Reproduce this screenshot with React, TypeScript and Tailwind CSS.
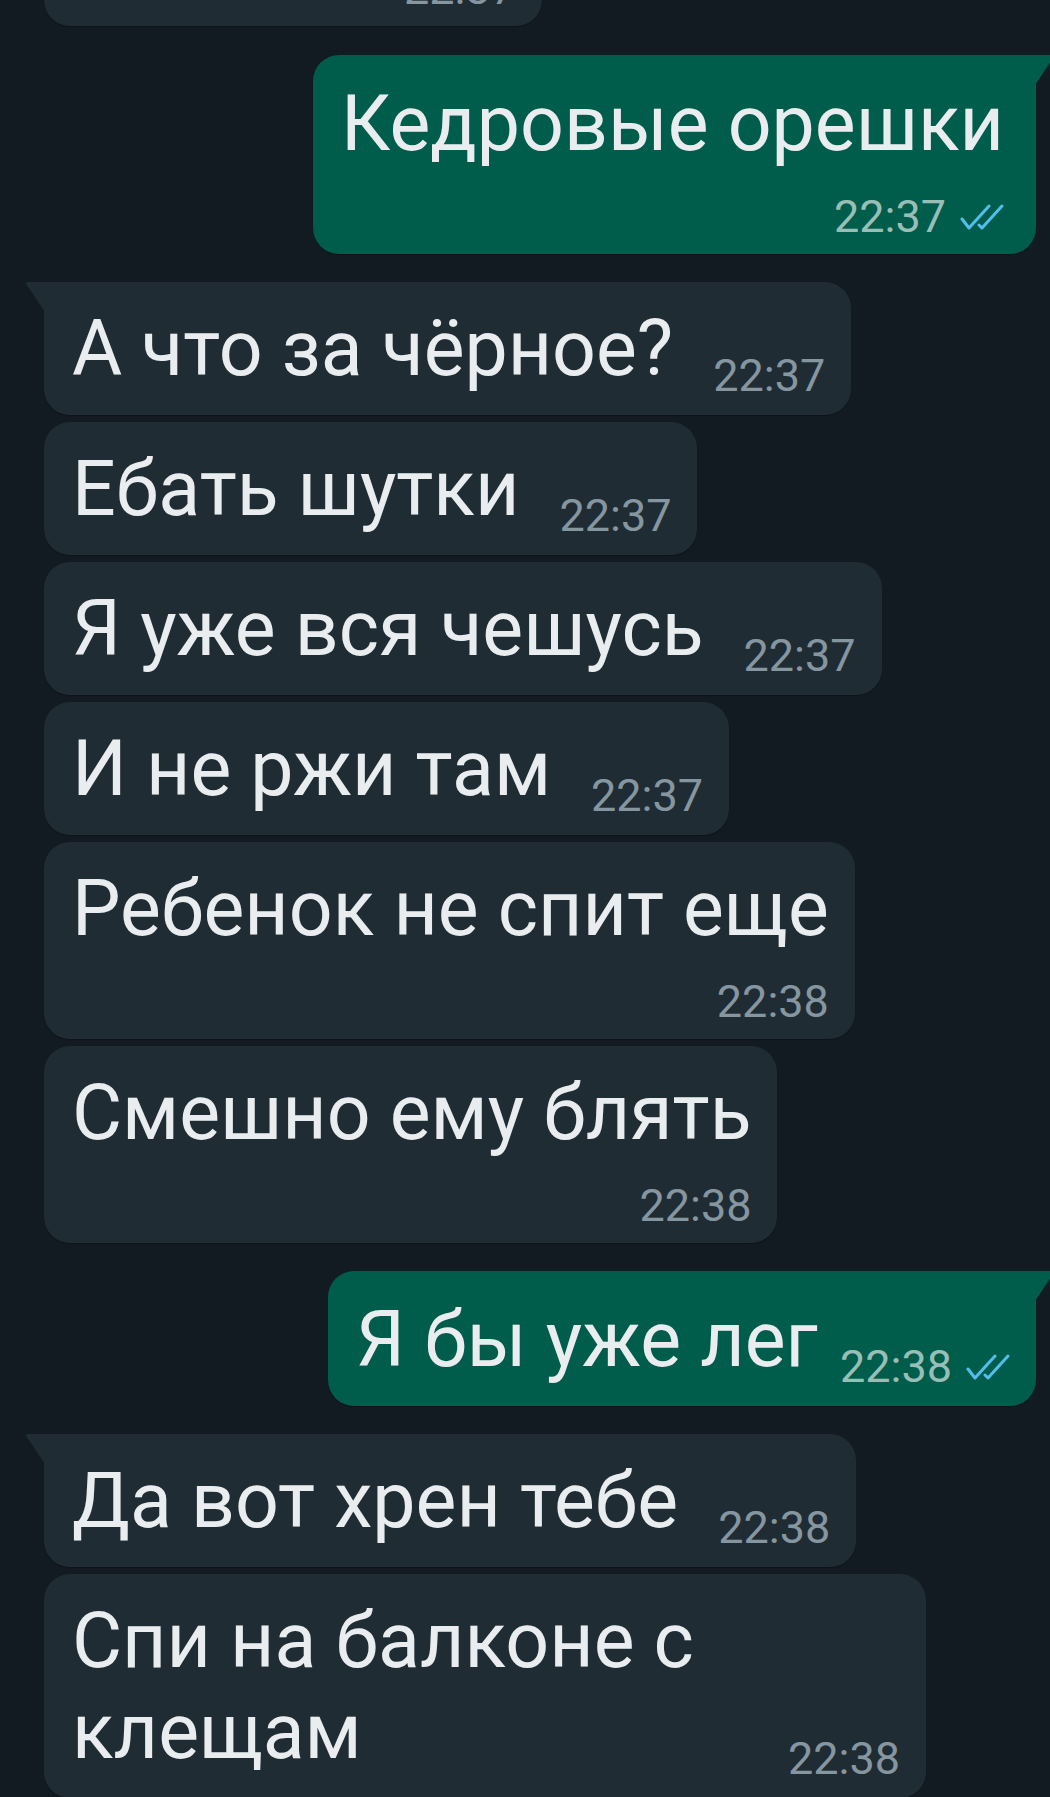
import React from 'react';

type Msg = {
  text: string;
  time: string;
  out?: boolean;
  tail?: boolean;
  below?: boolean;
};

const messages: Msg[] = [
  { text: 'Кедровые орешки', time: '22:37', out: true, tail: true, below: true },
  { text: 'А что за чёрное?', time: '22:37', tail: true },
  { text: 'Ебать шутки', time: '22:37' },
  { text: 'Я уже вся чешусь', time: '22:37' },
  { text: 'И не ржи там', time: '22:37' },
  { text: 'Ребенок не спит еще', time: '22:38', below: true },
  { text: 'Смешно ему блять', time: '22:38', below: true },
  { text: 'Я бы уже лег', time: '22:38', out: true, tail: true },
  { text: 'Да вот хрен тебе', time: '22:38', tail: true },
  { text: 'Спи на балконе с клещам', time: '22:38' },
];

const DoubleCheck = () => (
  <svg width="44" height="27" viewBox="0 0 44 27" fill="none" className="ml-[14px] shrink-0">
    <polyline points="2,15 9,24 29,2" stroke="#53bdeb" strokeWidth="3" strokeLinecap="round" strokeLinejoin="round" />
    <polyline points="19,21 22,24 42,2" stroke="#53bdeb" strokeWidth="3" strokeLinecap="round" strokeLinejoin="round" />
  </svg>
);

const Tail = ({ out }: { out?: boolean }) =>
  out ? (
    <svg width="20" height="30" viewBox="0 0 20 30" className="absolute top-0 -right-[19px]">
      <path d="M0 0 H17 Q20 0 18.5 2.5 L0 30 Z" fill="#005c4b" />
    </svg>
  ) : (
    <svg width="20" height="30" viewBox="0 0 20 30" className="absolute top-0 -left-[19px]">
      <path d="M20 0 H3 Q0 0 1.5 2.5 L20 30 Z" fill="#202c33" />
    </svg>
  );

function Time({ m }: { m: Msg }) {
  return (
    <div
      className={`flex items-center shrink-0 text-[45px] leading-[54px] ${
        m.out ? 'text-[#99beb6]' : 'text-[#8696a0]'
      }`}
    >
      <span>{m.time}</span>
      {m.out && <DoubleCheck />}
    </div>
  );
}

function Bubble({ m, first }: { m: Msg; first: boolean }) {
  const side = m.out
    ? 'self-end mr-[14px] pt-[24px] bg-[#005c4b] text-[#e9edef]'
    : 'self-start ml-[44px] pt-[22px] bg-[#202c33] text-[#e9edef]';
  const corner = m.tail ? (m.out ? 'rounded-tr-none' : 'rounded-tl-none') : '';
  const gap = first ? 'mt-[29px]' : m.tail ? 'mt-[28px]' : 'mt-[7px]';
  const pad = m.out && m.below ? 'pr-[32px]' : 'pr-[26px]';

  return (
    <div
      className={`relative max-w-[882px] rounded-[26px] pl-[28px] shadow-[0_1px_1px_rgba(0,0,0,0.25)] ${pad} ${side} ${corner} ${gap} ${
        m.below ? 'pb-[10px]' : 'pb-[12px]'
      }`}
    >
      {m.tail && <Tail out={m.out} />}
      {m.below ? (
        <>
          <div className="text-[77px] leading-[91px]">{m.text}</div>
          <div className="mt-[20px] flex justify-end">
            <Time m={m} />
          </div>
        </>
      ) : (
        <div className="flex items-end">
          <div className="min-w-0 pb-[8px] text-[77px] leading-[91px]">{m.text}</div>
          <div className={m.out ? 'ml-[22px]' : 'ml-[40px]'}>
            <Time m={m} />
          </div>
        </div>
      )}
    </div>
  );
}

export default function App() {
  return (
    <div className="w-[1050px] h-[1797px] overflow-hidden bg-[#111b21] font-['Roboto',sans-serif] flex flex-col">
      {/* tail end of the previous message, scrolled off the top */}
      <div className="self-start ml-[44px] -mt-[38px] w-[498px] rounded-b-[26px] bg-[#202c33] pr-[26px] pb-[10px] flex justify-end shadow-[0_1px_1px_rgba(0,0,0,0.25)]">
        <Time m={{ text: '', time: '22:37' }} />
      </div>
      {messages.map((m, i) => (
        <Bubble key={i} m={m} first={i === 0} />
      ))}
    </div>
  );
}
